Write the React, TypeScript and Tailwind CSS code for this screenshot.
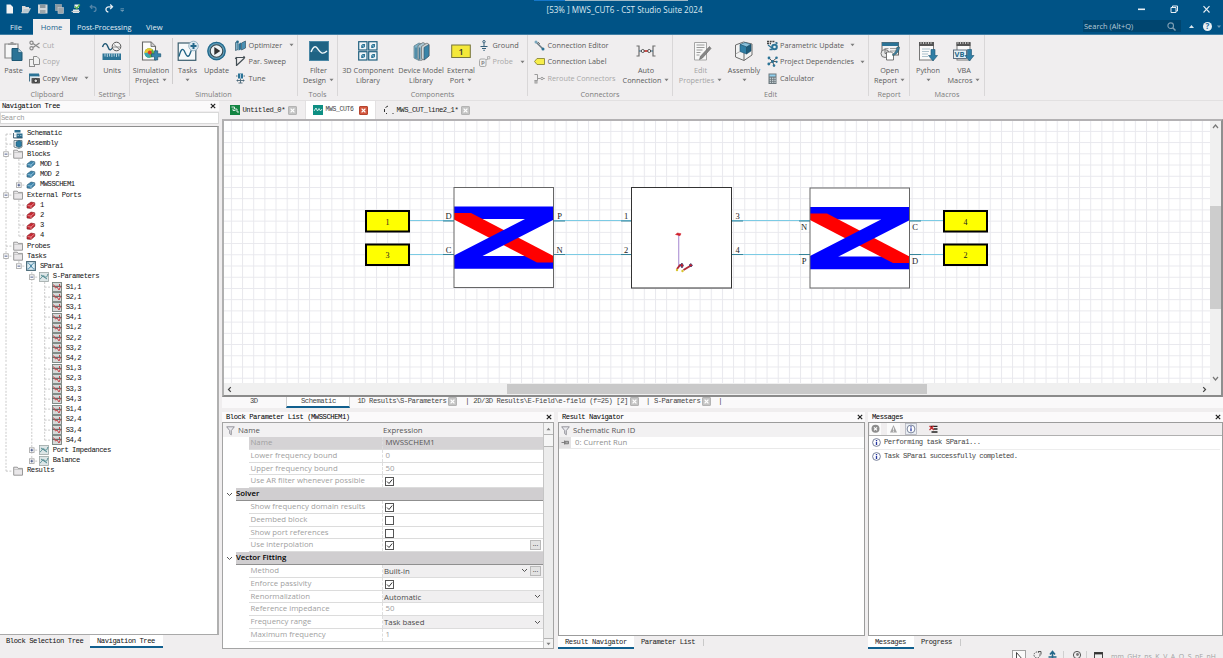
import React from "react";

type Kids = { children?: React.ReactNode };

const UI = "font-['Open_Sans','Noto_Sans',sans-serif]";
const MONO = "font-['Liberation_Mono',monospace] text-[7.2px] tracking-[-0.45px]";

/* ---------- small shared drawings ---------- */

function Caret({ className = "" }: { className?: string }) {
  return (
    <svg className={`h-[4px] w-[5px] shrink-0 ${className}`} viewBox="0 0 5 4">
      <path d="M0.5 0.8h4L2.5 3.2z" fill="#7d7d7d" />
    </svg>
  );
}

function CloseBox({ red = false }: { red?: boolean }) {
  return (
    <svg className="h-[9px] w-[9px] shrink-0" viewBox="0 0 9 9">
      <rect x="0.5" y="0.5" width="8" height="8" rx="0.5" fill={red ? "#d4583f" : "#c4c4c4"} stroke={red ? "#b5452f" : "#b4b4b4"} />
      <path d="M2.6 2.6l3.8 3.8M6.4 2.6L2.6 6.4" stroke="#fff" strokeWidth="1.3" />
    </svg>
  );
}

function PanelX() {
  return (
    <svg className="h-[6px] w-[6px] shrink-0" viewBox="0 0 6 6">
      <path d="M0.8 0.8l4.4 4.4M5.2 0.8L0.8 5.2" stroke="#222" strokeWidth="1.2" />
    </svg>
  );
}

function Funnel() {
  return (
    <svg className="h-[10px] w-[9px] shrink-0" viewBox="0 0 9 10">
      <path d="M0.7 0.8h7.6L5.3 4.6v4.2L3.7 7.6v-3z" fill="#e9e9ee" stroke="#8b8b93" strokeWidth="0.9" />
    </svg>
  );
}

/* ---------- ribbon drawings ---------- */

const big: Record<string, React.ReactNode> = {
  paste: (
    <>
      <path d="M1 3h13v6H9v8H1z" fill="#f7f7f7" stroke="#888" strokeWidth="1.2" />
      <path d="M4 4V2.500h2.500V1h3v1.500H12V4z" fill="#9a9a9a" />
      <path d="M8 7.500h6l4 4v8H8z" fill="#2b7396" stroke="#1d5673" />
      <path d="M14 7.500v4h4" fill="#bcd8e6" stroke="#1d5673" strokeWidth="0.700" />
    </>
  ),
  units: (
    <>
      <path d="M0.500 6c1.500-4.500 4-4.500 5.500 0s3.500 3 5 0" fill="none" stroke="#1d5673" strokeWidth="1.400" />
      <circle cx="14.500" cy="5.500" r="4.300" fill="#f4f4f4" stroke="#555" strokeWidth="1" />
      <path d="M12 3.500l5 4.500M11 6h7" stroke="#777" strokeWidth="0.800" />
      <rect x="0.500" y="12.500" width="18.500" height="6.500" fill="#2b7396" />
      <path d="M3 12.500v3M5.300 12.500v3.500M7.600 12.500v3M9.900 12.500v3.500M12.200 12.500v3M14.500 12.500v3.500M16.800 12.500v3" stroke="#dcebf2" strokeWidth="0.800" />
    </>
  ),
  simproj: (
    <>
      <path d="M1.500 1h8.500l4.500 4.500V19h-13z" fill="#fcfcfc" stroke="#666" strokeWidth="1.100" />
      <path d="M10 1v4.500h4.500" fill="#ccc" stroke="#666" strokeWidth="0.800" />
      <circle cx="8.300" cy="12" r="4.800" fill="#5db43c" />
      <path d="M3.500 12a4.800 4.800 0 0 1 5-4.800l3 1-3.200 4z" fill="#e9c62e" />
      <path d="M3.500 12l4.800-.5.8 5.200a4.800 4.800 0 0 1-5.600-4.700z" fill="#3aa6b0" />
      <circle cx="8.800" cy="11.500" r="2" fill="#dc3c2c" />
      <path d="M13.500 9.800h3.200v3h3v3h-3V19h-3.200v-3.200h-3v-3h3z" fill="#3585ad" stroke="#1d5673" strokeWidth="0.700" />
    </>
  ),
  tasks: (
    <>
      <rect x="0.200" y="2" width="17.600" height="17.300" fill="#f6f9fa" stroke="#3a5d6d" strokeWidth="1.200" />
      <path d="M1 15.500c2-8 4-9 6-4s4 5 5.500 0 3-4 5-4" fill="none" stroke="#1f6384" strokeWidth="1.300" />
      <circle cx="15.500" cy="5" r="4.800" fill="#dce9f0" stroke="#86a7b8" strokeWidth="0.800" />
      <path d="M15.500 2v6M12.500 5h6" stroke="#24688a" strokeWidth="2" />
    </>
  ),
  update: (
    <>
      <circle cx="9.500" cy="10" r="9.300" fill="#5f9dba" />
      <circle cx="9.500" cy="10" r="8.600" fill="none" stroke="#24688a" strokeWidth="1.200" />
      <circle cx="9.500" cy="10" r="6.300" fill="#eef2f4" stroke="#37484f" strokeWidth="1.100" />
      <path d="M7.300 6l6 4-6 4z" fill="#333" />
    </>
  ),
  filter: (
    <>
      <rect x="0" y="0" width="20" height="20" fill="#1f6384" />
      <rect x="0.500" y="0.500" width="19" height="19" fill="none" stroke="#4a87a5" />
      <path d="M0 10h20" stroke="#4a87a5" strokeWidth="0.500" />
      <path d="M2 11c2-5 4-7 6.500-3.500S13 14.500 18 10" fill="none" stroke="#f3f8fa" strokeWidth="1.400" />
    </>
  ),
  comp3d: (
    <>
      {[[0.7, 0.7], [10.7, 0.7], [0.7, 10.7], [10.7, 10.7]].map(([x, y]) => (
        <g key={`${x}-${y}`} transform={`translate(${x} ${y})`}>
          <rect width="8.300" height="8.300" fill="#f1f6f8" stroke="#215f7e" strokeWidth="1.200" />
          <path d="M2.500 3.500l1.500-1.200h2.300v2.500L5 6.300H2.500z" fill="#2b7396" />
          <path d="M3 4h2v2" fill="none" stroke="#9cc4d6" strokeWidth="0.700" />
        </g>
      ))}
    </>
  ),
  device: (
    <>
      <path d="M3 5l5-3 3 1.200v14L8 19.500 3 17z" fill="#7fb3ca" stroke="#557684" strokeWidth="0.700" />
      <path d="M7 4.500l5-3 2.500 1.300v14.500L10 19.500l-3-1.500z" fill="#a9c6d3" stroke="#666" strokeWidth="0.700" />
      <path d="M10.500 5.500L16 2l2 1.500V15l-5 4-2.500-1.300z" fill="#cdd5d8" stroke="#666" strokeWidth="0.700" />
      <path d="M13 6.500V19l5-4V3.500z" fill="#3a84a8" stroke="#35566a" strokeWidth="0.600" />
      <path d="M5 6.500v11M8.700 6.500V18" stroke="#30708f" strokeWidth="1.100" />
    </>
  ),
  extport: (
    <>
      <rect x="0.700" y="4" width="18.600" height="12.500" fill="#f4e83a" stroke="#77753e" strokeWidth="1" />
      <text x="10" y="13.700" textAnchor="middle" fontSize="9" fontWeight="600" fill="#333" fontFamily="Open Sans">1</text>
    </>
  ),
  auto: (
    <>
      <path d="M0.500 5H3v10H0.500M19.500 5H17v10h2.500" fill="none" stroke="#6c6c6c" strokeWidth="1.200" />
      <path d="M3 10h3M14 10h3" stroke="#356c88" strokeWidth="1.100" />
      <path d="M8 10h4" stroke="#c8322c" strokeWidth="1.700" />
      <circle cx="6.800" cy="10" r="1.500" fill="#fff" stroke="#444" strokeWidth="0.900" />
      <circle cx="13.200" cy="10" r="1.500" fill="#fff" stroke="#444" strokeWidth="0.900" />
    </>
  ),
  editprop: (
    <>
      <path d="M3.500 1.500h12V19h-12z" fill="#f7f7f7" stroke="#a5a5a5" />
      <path d="M5.500 4h8M5.500 6.500h8M5.500 9h6M5.500 11.500h4M5.500 14h3" stroke="#9a9a9a" strokeWidth="1" />
      <path d="M18.500 5.500l1.500 2-8.500 9.500-3 1.500 1-3.300z" fill="#858585" stroke="#666" strokeWidth="0.600" />
    </>
  ),
  assembly: (
    <>
      <path d="M1.500 4l8-3 8.500 2v11l-8 5.500L1.500 16z" fill="#f2f2f2" stroke="#6c6c6c" strokeWidth="1" />
      <path d="M10 19.500V11" stroke="#6c6c6c" />
      <path d="M6 3.500l5-2 6 2-4.500 2.500z" fill="#8ac0da" stroke="#1d5673" strokeWidth="0.600" />
      <path d="M6 3.500l6.500 2.500v7L6 10.500z" fill="#2f7ea5" stroke="#1d5673" strokeWidth="0.600" />
      <path d="M12.500 6L17 3.500v6.500l-4.500 3z" fill="#1d5c7c" stroke="#174a63" strokeWidth="0.600" />
      <path d="M1.500 13l4.500-2.500" fill="none" stroke="#999" strokeWidth="0.800" />
    </>
  ),
  report: (
    <>
      <rect x="2" y="1.500" width="16.500" height="12.500" fill="#f3f3f3" stroke="#666" />
      <rect x="2" y="1.500" width="16.500" height="3.500" fill="#2b7396" />
      <path d="M4.500 7.500h4M10 7.500h7M10 10h7" stroke="#888" strokeWidth="0.800" />
      <circle cx="5" cy="12.500" r="4" fill="#e7e7e7" stroke="#777" />
      <path d="M5 8.500v4h4" fill="none" stroke="#777" />
      <path d="M6.500 11h5l2 2v6h-7z" fill="#fff" stroke="#666" strokeWidth="0.900" />
      <path d="M19.500 6c0 4-2.500 7-6 8.500l-1.500-.5c3-2 4-4 5-8z" fill="#3f7e9f" stroke="#355" strokeWidth="0.500" />
    </>
  ),
  python: (
    <>
      <rect x="1.500" y="2" width="14" height="17" fill="#fafafa" stroke="#777" />
      <rect x="1" y="1" width="15" height="4" fill="#555" />
      <path d="M3 0v3M5.500 0v3M8 0v3M10.500 0v3M13 0v3" stroke="#ddd" strokeWidth="0.800" />
      <path d="M4 8h8M4 10.500h7M4 13h6M4 15.500h6" stroke="#a5bcc8" strokeWidth="0.900" />
      <path d="M13 8.500h4v6h2.500L15 20l-4.500-5.500H13z" fill="#2f7ea5" stroke="#1d5673" strokeWidth="0.600" />
    </>
  ),
  vba: (
    <>
      <rect x="3" y="2" width="13" height="17" fill="#fafafa" stroke="#777" />
      <rect x="2.500" y="1" width="14" height="4" fill="#555" />
      <path d="M4 0v3M6.500 0v3M9 0v3M11.500 0v3M14 0v3" stroke="#ddd" strokeWidth="0.800" />
      <rect x="-0.500" y="9" width="13" height="8.500" fill="#e4eff5" stroke="#567" strokeWidth="0.900" />
      <text x="5.500" y="16.200" textAnchor="middle" fontSize="7.500" fontWeight="700" fill="#24688a" fontFamily="Open Sans">VB</text>
      <path d="M13.500 8.500h4v6H20L15.500 20 11 14.500h2.500z" fill="#2f7ea5" stroke="#1d5673" strokeWidth="0.600" />
    </>
  ),
};

const small: Record<string, React.ReactNode> = {
  cut: (
    <g fill="none" stroke="#8a8a8a" strokeWidth="1.200">
      <circle cx="2.500" cy="2.800" r="1.600" />
      <circle cx="2.500" cy="8.200" r="1.600" />
      <path d="M4 3.500L10.500 8M4 7.500L10.500 3" />
    </g>
  ),
  copy: (
    <g fill="#f1f1f1" stroke="#8c8c8c" strokeWidth="1">
      <rect x="0.500" y="3.500" width="5" height="7" />
      <path d="M4.500 0.500h3.500l2.500 2.500v5.500h-6z" />
    </g>
  ),
  copyview: (
    <>
      <path d="M0.500 8.500v-7h9.500v2" fill="#dbe7ed" stroke="#46728a" />
      <rect x="0" y="0.500" width="10" height="2.800" fill="#2b7396" />
      <rect x="2.500" y="5" width="8.500" height="5.500" rx="0.800" fill="#555" />
      <circle cx="6.800" cy="7.800" r="1.800" fill="#ddd" stroke="#222" strokeWidth="0.800" />
    </>
  ),
  optimizer: (
    <>
      <path d="M0.500 2.500L3 1.500v8L.5 10.500z" fill="#7fb3ca" stroke="#35566a" strokeWidth="0.700" />
      <path d="M3.500 4L6 2.500v7L3.500 10.500z" fill="#2b7396" />
      <path d="M6.500 3L10.500 1v7L6.500 10z" fill="#4a90b3" stroke="#35566a" strokeWidth="0.700" />
      <circle cx="2.500" cy="1.800" r="1.300" fill="#24688a" />
    </>
  ),
  parsweep: <path d="M1.500 10V1.500H10M1.500 9.500L9.500 2M0.300 3l1.200-2M8.500 .300l1.500 1.300" fill="none" stroke="#454f55" strokeWidth="1.200" />,
  tune: (
    <>
      <rect x="3" y="0.500" width="5" height="5" fill="#2b7396" />
      <path d="M5.500 1v4" stroke="#cde" strokeWidth="0.800" />
      <path d="M1 3h1.500M8.500 3H10M1.500 7.500h8M2.500 6.500v2M5.500 6v4M8.500 6.500v2M3.500 10h4" stroke="#4c6878" strokeWidth="0.900" />
    </>
  ),
  ground: (
    <g fill="none" stroke="#37607a" strokeWidth="1">
      <circle cx="5" cy="1.700" r="1.200" />
      <path d="M5 3v4M1.500 6.500h7M3 8.500h4M4.300 10.300h1.500" />
    </g>
  ),
  probe: (
    <>
      <rect x="0.500" y="3" width="6.500" height="7.500" rx="1.500" fill="#f0f0f0" stroke="#a9a9a9" />
      <text x="3.800" y="9.300" textAnchor="middle" fontSize="6" fontWeight="700" fill="#8a8a8a" fontFamily="Open Sans">P</text>
      <path d="M7 3.500h1.500V0.600h2.300v2.300H8.500" fill="none" stroke="#a9a9a9" strokeWidth="0.900" />
    </>
  ),
  coneditor: (
    <>
      <path d="M2.500 2.500L9 9" stroke="#6a7a84" strokeWidth="1.500" />
      <circle cx="2" cy="2" r="1.500" fill="#7aa7bd" />
      <circle cx="9" cy="9" r="1.500" fill="#2b7396" />
      <path d="M4 2l2 2" stroke="#444" strokeWidth="0.700" />
    </>
  ),
  conlabel: <path d="M0.500 5.500L3 2.500h7.500v6H3z" fill="#f7ee4a" stroke="#8a873c" strokeWidth="0.900" />,
  reroute: (
    <g fill="none" stroke="#9b9b9b" strokeWidth="1">
      <path d="M0.500 1.500h3v6H0.500M3.500 5.500h3" />
      <rect x="1" y="8" width="2" height="2" />
      <circle cx="8" cy="5.500" r="1.200" />
      <path d="M9 5.500h1.800" />
    </g>
  ),
  parupdate: (
    <>
      <path d="M0 1.500h8M0 3.500h4" stroke="#444" strokeWidth="1.300" strokeDasharray="2 0.700" />
      <path d="M1 5l4 3M2.500 9.500h3" stroke="#2b7396" strokeWidth="1.300" />
      <circle cx="7.500" cy="7" r="3.300" fill="#2b7396" />
      <circle cx="7.500" cy="7" r="1.300" fill="#e7f1f5" />
      <path d="M8.500 2.500l2 1" stroke="#24688a" strokeWidth="1.400" />
    </>
  ),
  deps: (
    <>
      <path d="M5.500 5.500L2 2M5.500 5.500L9.500 2M5.500 5.500L1.500 8M5.500 5.500l1.500 4M5.500 5.500h4" stroke="#444" strokeWidth="0.900" />
      <g fill="#2b7396">
        <circle cx="2" cy="2" r="1.400" />
        <circle cx="9.500" cy="1.800" r="1.300" />
        <circle cx="1.800" cy="8" r="1.400" />
        <circle cx="7" cy="9.600" r="1.300" />
        <circle cx="9.600" cy="5.800" r="1.100" />
        <circle cx="5.500" cy="5.500" r="1.500" />
      </g>
    </>
  ),
  calc: (
    <>
      <rect x="1.500" y="0.500" width="8" height="10.500" fill="#6c787e" />
      <rect x="2.500" y="1.500" width="6" height="2" fill="#8fd0ee" />
      <path d="M2.700 5.300h6M2.700 7.300h6M2.700 9.300h6" stroke="#dfe8ec" strokeWidth="1.100" strokeDasharray="1.400 0.900" />
    </>
  ),
};

function BigButton({ icon, w, lines, caret, dim }: { icon: string; w: string; lines: string[]; caret?: boolean; dim?: boolean }) {
  const two = lines.length > 1;
  return (
    <div className={`flex ${w} shrink-0 flex-col items-center ${dim ? "text-[#a3a3a3]" : "text-[#5b5b5b]"}`}>
      <svg className="mt-[6px] h-[20px] w-[20px] overflow-visible" viewBox="0 0 20 20">{big[icon]}</svg>
      <div className="mt-[4px] h-[10px] whitespace-nowrap leading-[10px]">{lines[0]}</div>
      <div className="flex h-[10px] items-center gap-[3px] whitespace-nowrap leading-[10px]">
        {two && <span>{lines[1]}</span>}
        {caret && <Caret />}
      </div>
    </div>
  );
}

function SmallButton({ icon, label, caret, dim, gap = "ml-[7px]" }: { icon: string; label: string; caret?: boolean; dim?: boolean; gap?: string }) {
  return (
    <div className={`flex h-[16.600px] items-center whitespace-nowrap ${dim ? "text-[#a8a8a8]" : "text-[#5b5b5b]"}`}>
      <svg className="mr-[2.500px] h-[11px] w-[11px] shrink-0 overflow-visible" viewBox="0 0 11 11">{small[icon]}</svg>
      <span>{label}</span>
      {caret && <Caret className={gap} />}
    </div>
  );
}

function Group({ w, title, children }: { w: string; title: string } & Kids) {
  return (
    <div className={`flex ${w} shrink-0 flex-col`}>
      <div className="flex h-[61px] w-full border-r border-[#d9d7d8]">
        <div className="flex w-full flex-col">
          <div className="flex h-[53px]">{children}</div>
          <div className="-mb-[4px] h-[12px] text-center leading-[12px] text-[#7c7c7c]">{title}</div>
        </div>
      </div>
    </div>
  );
}

function Stack({ w = "", children }: { w?: string } & Kids) {
  return <div className={`flex ${w} flex-col pt-[2px]`}>{children}</div>;
}

function Ribbon() {
  return (
    <div className={`flex h-[66px] shrink-0 border-b border-[#e2e0e1] bg-[#f0eeef] text-[7.300px] ${UI}`}>
      <Group w="w-[95px]" title="Clipboard">
        <BigButton icon="paste" w="w-[27px]" lines={["Paste"]} />
        <Stack w="ml-[2px]">
          <SmallButton icon="cut" label="Cut" dim />
          <SmallButton icon="copy" label="Copy" dim />
          <SmallButton icon="copyview" label="Copy View" caret gap="ml-[7px]" />
        </Stack>
      </Group>
      <Group w="w-[35px]" title="Settings">
        <BigButton icon="units" w="w-[34px]" lines={["Units"]} />
      </Group>
      <Group w="w-[168px]" title="Simulation">
        <BigButton icon="simproj" w="w-[42px]" lines={["Simulation", "Project"]} caret />
        <div className="mt-[3px] h-[46px] w-px bg-[#cfcdce]" />
        <BigButton icon="tasks" w="w-[29px]" lines={["Tasks"]} caret />
        <BigButton icon="update" w="w-[29px]" lines={["Update"]} />
        <Stack w="ml-[4px]">
          <SmallButton icon="optimizer" label="Optimizer" caret />
          <SmallButton icon="parsweep" label="Par. Sweep" />
          <SmallButton icon="tune" label="Tune" />
        </Stack>
      </Group>
      <Group w="w-[40px]" title="Tools">
        <BigButton icon="filter" w="w-[41px]" lines={["Filter", "Design"]} caret />
      </Group>
      <Group w="w-[190px]" title="Components">
        <div className="-mr-px ml-px flex">
          <BigButton icon="comp3d" w="w-[58px]" lines={["3D Component", "Library"]} />
          <BigButton icon="device" w="w-[48px]" lines={["Device Model", "Library"]} />
          <BigButton icon="extport" w="w-[32px]" lines={["External", "Port"]} caret />
        </div>
        <Stack w="ml-[3px]">
          <SmallButton icon="ground" label="Ground" />
          <SmallButton icon="probe" label="Probe" caret dim />
        </Stack>
      </Group>
      <Group w="w-[145px]" title="Connectors">
        <Stack w="ml-[6px] w-[86px]">
          <SmallButton icon="coneditor" label="Connection Editor" />
          <SmallButton icon="conlabel" label="Connection Label" />
          <SmallButton icon="reroute" label="Reroute Connectors" dim />
        </Stack>
        <BigButton icon="auto" w="w-[52px]" lines={["Auto", "Connection"]} caret />
      </Group>
      <Group w="w-[196px]" title="Edit">
        <BigButton icon="editprop" w="w-[55px]" lines={["Edit", "Properties"]} caret dim />
        <BigButton icon="assembly" w="w-[32px]" lines={["Assembly"]} caret />
        <Stack w="ml-[6.500px]">
          <SmallButton icon="parupdate" label="Parametric Update" caret gap="ml-[6px]" />
          <SmallButton icon="deps" label="Project Dependencies" caret gap="ml-[6px]" />
          <SmallButton icon="calc" label="Calculator" />
        </Stack>
      </Group>
      <Group w="w-[41px]" title="Report">
        <BigButton icon="report" w="w-[41px]" lines={["Open", "Report"]} caret />
      </Group>
      <Group w="w-[75px]" title="Macros">
        <BigButton icon="python" w="w-[36px]" lines={["Python"]} caret />
        <BigButton icon="vba" w="w-[36px]" lines={["VBA", "Macros"]} caret />
      </Group>
    </div>
  );
}

/* ---------- title and menu ---------- */

function TitleBar() {
  return (
    <div className={`flex h-[19px] shrink-0 items-center bg-[#005386] text-[#dbe8f0] ${UI}`}>
      <svg className="h-[19px] w-[130px] shrink-0" viewBox="0 0 130 19">
        <path d="M6.500 4.500h4l2.500 2.500v6.500H6.500z" fill="#f3f3f3" />
        <path d="M22 6h3l1 1h3v2h-5l-2 4z" fill="#d9d9d9" />
        <path d="M21.500 13l2.500-4.500h6.500L28 13z" fill="#b9c8cf" stroke="#e8e8e8" strokeWidth="0.500" />
        <rect x="38" y="4.500" width="9.500" height="9" fill="#cfd5d8" />
        <rect x="40" y="4.500" width="5.500" height="3.500" fill="#8b979e" />
        <rect x="40" y="10" width="5.500" height="3.500" fill="#9ba6ab" />
        <rect x="55.500" y="4.500" width="6" height="6" fill="#8b979e" stroke="#a5b1b8" strokeWidth="0.600" />
        <rect x="58" y="7.500" width="5.500" height="6" fill="#9aa5ab" stroke="#c5ccd0" strokeWidth="0.600" />
        <path d="M73 9.500h6V13h-6zM74.500 4.500h4.500v3.500h-4.500z" fill="#ecedee" />
        <path d="M71.500 11.500h8.500" stroke="#bfc7cb" strokeWidth="1.300" />
        <path d="M75 6.500l1.800 2 3-4" fill="none" stroke="#5db947" strokeWidth="1.300" />
        <path d="M90.500 6.800h3.200a2.300 2.300 0 0 1 0 4.700M92.200 4.800l-2 2 2 2" fill="none" stroke="#5586a8" strokeWidth="1.200" />
        <path d="M112 6.800h-3.200a2.600 2.600 0 0 0-.500 5.200M110.200 4.500l2.300 2.300-2.300 2.300" fill="none" stroke="#e6eef3" strokeWidth="1.300" />
        <path d="M120.500 8.500h3.500M120.500 10h3.500l-1.700 1.500z" fill="#6f9ab6" stroke="#6f9ab6" strokeWidth="0.600" />
      </svg>
      <div className="flex h-[19px] flex-1 flex-col">
        <div className="ml-[404px] flex h-px shrink-0">
          <div className="w-[31px] bg-[#1577c9]" />
          <div className="w-[123px] bg-[#9fb9c6]" />
        </div>
        <div className="ml-[416.500px] whitespace-nowrap text-[8.050px] leading-[18px]">[53% ] MWS_CUT6 - CST Studio Suite 2024</div>
      </div>
      <svg className="h-[19px] w-[93px] shrink-0" viewBox="0 0 93 19">
        <path d="M8 9.300h7" stroke="#e8eff4" strokeWidth="1.600" />
        <path d="M41 7.500h5v5h-5zM42.500 7.500V6h5v5H46" fill="none" stroke="#e8eff4" strokeWidth="1" />
        <path d="M73.500 6.200l6 6.300M79.500 6.200l-6 6.300" stroke="#e8eff4" strokeWidth="1.100" />
      </svg>
    </div>
  );
}

function MenuBar() {
  return (
    <div className={`flex h-[16px] shrink-0 items-stretch border-b border-[#3f7ea4] bg-[#005386] text-[7.600px] leading-[16px] text-[#e3edf3] ${UI}`}>
      <div className="w-[33px] pl-[10px]">File</div>
      <div className="-mb-px w-[37px] bg-[#f0eeef] text-center text-[#1a5f8c]">Home</div>
      <div className="w-[69px] pl-[7px] text-[7.400px]">Post-Processing</div>
      <div className="flex-1 pl-[7px]">View</div>
      <div className="mt-px flex h-[12px] w-[98px] items-center justify-between bg-[#00456f] pl-[1px] pr-[5px] text-[7.450px] leading-[11px] text-[#b7cbd8]">
        <span>Search (Alt+Q)</span>
        <svg className="h-[9px] w-[9px]" viewBox="0 0 9 9">
          <circle cx="3.700" cy="3.700" r="2.800" fill="none" stroke="#7f9fb4" strokeWidth="1.100" />
          <path d="M5.800 5.800L8.500 8.500" stroke="#7f9fb4" strokeWidth="1.500" />
        </svg>
      </div>
      <svg className="h-[15px] w-[42px]" viewBox="0 0 42 15">
        <path d="M8 9l2.500-3L13 9z" fill="#dce8ef" />
        <circle cx="26.500" cy="7.500" r="4.500" fill="#e9f1f5" />
        <text x="26.500" y="10.300" textAnchor="middle" fontSize="8" fontWeight="700" fill="#1c6a9a" fontFamily="Open Sans">?</text>
        <path d="M36 6.500h4L38 9z" fill="#6f9ab6" />
      </svg>
    </div>
  );
}

/* ---------- navigation tree ---------- */

type Node = { l: number; t: string; i: string; x?: "-" | "+"; g: number[]; end?: boolean };

const sNames = [1, 2, 3, 4].flatMap((b) => [1, 2, 3, 4].map((a) => `S${a},${b}`));

const tree: Node[] = [
  { l: 0, t: "Schematic", i: "schem", g: [] },
  { l: 0, t: "Assembly", i: "asm", g: [] },
  { l: 0, t: "Blocks", i: "folder", x: "-", g: [] },
  { l: 1, t: "MOD 1", i: "blue", g: [0] },
  { l: 1, t: "MOD 2", i: "blue", g: [0] },
  { l: 1, t: "MWSSCHEM1", i: "blue", x: "+", g: [0], end: true },
  { l: 0, t: "External Ports", i: "folder", x: "-", g: [] },
  { l: 1, t: "1", i: "red", g: [0] },
  { l: 1, t: "2", i: "red", g: [0] },
  { l: 1, t: "3", i: "red", g: [0] },
  { l: 1, t: "4", i: "red", g: [0], end: true },
  { l: 0, t: "Probes", i: "folder", g: [] },
  { l: 0, t: "Tasks", i: "folder", x: "-", g: [] },
  { l: 1, t: "SPara1", i: "task", x: "-", g: [0], end: true },
  { l: 2, t: "S-Parameters", i: "plot", x: "-", g: [0] },
  ...sNames.map((t, k): Node => ({ l: 3, t, i: "sp", g: [0, 2], end: k === 15 })),
  { l: 2, t: "Port Impedances", i: "plot", x: "+", g: [0] },
  { l: 2, t: "Balance", i: "plot", x: "+", g: [0], end: true },
  { l: 0, t: "Results", i: "folder", g: [], end: true },
];

const treeIcons: Record<string, React.ReactNode> = {
  schem: (
    <>
      <path d="M0.500 2.500h3M1.500 1h6v2.500h-6zM3.500 4.500h6V9h-6z" fill="#2d6f90" />
      <path d="M1 6h2M1 8.500h2M4.500 6.500H6M7 6.500h1.500" stroke="#a8c4d2" strokeWidth="0.800" />
      <path d="M0.500 4v5h9" fill="none" stroke="#29465a" strokeWidth="0.800" />
    </>
  ),
  asm: (
    <>
      <path d="M1 1.500h8v6.500L6 9.500 1 8z" fill="#e6ecef" stroke="#6d7d85" strokeWidth="0.900" />
      <path d="M3 3l3-1.500 2.500 1.200V7L6 8.500 3 7z" fill="#2b7ba1" stroke="#174a63" strokeWidth="0.500" />
    </>
  ),
  folder: (
    <>
      <path d="M0.700 1.200h3.600l.8 1.200h4.400v6.800H.7z" fill="#e9e7e9" stroke="#8e8e8e" strokeWidth="0.900" />
      <path d="M1 3.500h8.300" stroke="#bdbdbd" strokeWidth="0.700" />
    </>
  ),
  blue: (
    <>
      <path d="M1 5l4-3 3.800.8v2.400L5 8.500 1 8z" fill="#3f86ad" stroke="#2a566f" strokeWidth="0.600" />
      <path d="M1.500 5.500l3.500.5v2.500M5 6l3.500-3" fill="none" stroke="#aad0e2" strokeWidth="0.700" />
    </>
  ),
  red: (
    <>
      <path d="M1 5l4-3 3.800.8v2.400L5 8.500 1 8z" fill="#c72a34" stroke="#7c1c22" strokeWidth="0.600" />
      <path d="M1.500 5.500l3.500.5v2.500M5 6l3.500-3" fill="none" stroke="#eda7aa" strokeWidth="0.700" />
    </>
  ),
  task: (
    <>
      <rect x="0.600" y="0.600" width="8.800" height="8.800" fill="#d9eaf1" stroke="#4a6a79" strokeWidth="1.100" />
      <path d="M1.500 2c3 0 4 6 7 6M1.500 8c3 0 4-6 7-6" fill="none" stroke="#2b7396" strokeWidth="0.900" />
    </>
  ),
  plot: (
    <>
      <rect x="0.500" y="0.500" width="9" height="9" fill="#dce5e6" stroke="#9ca6a5" strokeWidth="0.800" />
      <path d="M1 7c2-1 2-4 4-3s2 3 4-2M2 3l6 4" fill="none" stroke="#3f7f86" strokeWidth="0.900" />
    </>
  ),
  sp: (
    <>
      <rect x="0.500" y="0.500" width="9" height="9" fill="#d6d9d8" stroke="#77807d" strokeWidth="0.900" />
      <path d="M0.500 4.300h9" stroke="#444" strokeWidth="0.900" />
      <path d="M1.500 2.500l2 3.500L5 5l2 3 1.500-3.500M7.500 2v2" fill="none" stroke="#c4454a" strokeWidth="1" />
    </>
  ),
};

const STEP = 12.9;
const ROW = 10.23;

function TreeRow({ n, first }: { n: Node; first: boolean }) {
  const w = 13 + STEP * n.l;
  const x = 6 + STEP * n.l;
  const mid = ROW / 2;
  return (
    <div className="flex h-[10.230px] items-center">
      <svg className="h-[10.230px] shrink-0" style={{ width: w }} viewBox={`0 0 ${w} ${ROW}`}>
        <g stroke="#bdbdbd" strokeWidth="0.800" strokeDasharray="2 1.400">
          {n.g.map((k) => (
            <path key={k} d={`M${6 + STEP * k} 0V${ROW}`} />
          ))}
          <path d={`M${x} ${first ? mid : 0}V${n.end ? mid : ROW}`} />
          <path d={`M${x} ${mid}H${w - 0.5}`} />
        </g>
        {n.x && (
          <>
            <rect x={x - 2.3} y={mid - 2.3} width="4.600" height="4.600" fill="#fff" stroke="#a2a2a2" strokeWidth="0.800" />
            <path d={`M${x - 1.4} ${mid}h2.800`} stroke="#3a4c80" strokeWidth="0.900" />
            {n.x === "+" && <path d={`M${x} ${mid - 1.4}v2.800`} stroke="#3a4c80" strokeWidth="0.900" />}
          </>
        )}
      </svg>
      <svg className="mr-[4px] h-[10px] w-[10px] shrink-0" viewBox="0 0 10 10">{treeIcons[n.i]}</svg>
      <span className="whitespace-pre text-[#111]">{n.t}</span>
    </div>
  );
}

function NavTree() {
  return (
    <div className="flex w-[219px] shrink-0 flex-col">
      <div className={`flex h-[10px] items-center justify-between bg-[#fbfafb] pl-[2px] pr-[3px] text-black ${MONO}`}>
        <span>Navigation Tree</span>
        <PanelX />
      </div>
      <div className={`mt-px flex h-[12px] items-center border border-[#d9d9d9] bg-white text-[#9b9b9b] ${MONO}`}>Search</div>
      <div className={`mt-[2px] h-[509px] overflow-hidden border-b border-r-2 border-t border-b-[#a9a9a9] border-r-[#b0b0b0] border-t-[#8d8d8d] bg-white pt-[1.500px] ${MONO}`}>
        {tree.map((n, k) => (
          <TreeRow key={k} n={n} first={k === 0} />
        ))}
      </div>
      <div className={`flex h-[13px] items-stretch leading-[13px] text-[#111] ${MONO}`}>
        <div className="w-[90px] pl-[6px]">Block Selection Tree</div>
        <div className="w-[73px] border-b-2 border-[#11608f] bg-white pl-[7px]">Navigation Tree</div>
      </div>
    </div>
  );
}

/* ---------- document area ---------- */

function DocTabs() {
  return (
    <div className={`flex h-[18px] shrink-0 items-stretch text-[#222] ${MONO}`}>
      <div className="flex w-[83px] items-center gap-[2.500px] pl-[8px]">
        <svg className="h-[10px] w-[10px]" viewBox="0 0 10 10">
          <rect width="10" height="10" fill="#138442" />
          <path d="M1.500 2h3v2h2.500v3h2M3 3.500v2h2.500" fill="none" stroke="#e9f5ee" strokeWidth="0.900" />
        </svg>
        <span>Untitled_0*</span>
        <CloseBox />
      </div>
      <div className="flex w-[71px] items-center gap-[2.500px] border-x border-[#e3e1e2] bg-white pl-[7px] text-[6.400px] tracking-[-0.350px]">
        <svg className="h-[10px] w-[10px]" viewBox="0 0 10 10">
          <rect width="10" height="10" fill="#0e8f83" />
          <path d="M1 6l2-3 1.500 3L6 3.500 7.500 6 9 4" fill="none" stroke="#dff3f0" strokeWidth="0.900" />
        </svg>
        <span className="w-[31px] whitespace-nowrap text-[#444]">MWS_CUT6</span>
        <CloseBox red />
      </div>
      <div className="flex items-center gap-[2.500px] pl-[8px]">
        <svg className="h-[10px] w-[10px]" viewBox="0 0 10 10">
          <path d="M4 1L1.500 2.500M0.500 4v3M2 8l1 1M8.500 8.500h1" stroke="#333" strokeWidth="1" />
        </svg>
        <span>MWS_CUT_line2_1*</span>
        <CloseBox />
      </div>
    </div>
  );
}

function PortBox({ x, y, n }: { x: number; y: number; n: string }) {
  return (
    <g>
      <rect x={x} y={y} width="43" height="20.500" fill="#ffff00" stroke="#000" strokeWidth="2" />
      <text x={x + 21.500} y={y + 13.500} textAnchor="middle" fontSize="8" fill="#222">{n}</text>
    </g>
  );
}

function Crossover({ x, y }: { x: number; y: number }) {
  return (
    <g transform={`translate(${x} ${y})`}>
      <rect x="0" y="0" width="99.500" height="100" fill="#fff" />
      <path d="M0 19h99.500v12.500H0z" fill="#0000ff" />
      <path d="M0 68.500h99.500v12.700H0z" fill="#0000ff" />
      <path d="M0 25.500h17L99.500 68.500V75H83L0 32z" fill="#ff0000" />
      <path d="M71 31.500V30h28.500v2.200L28.500 68.500V70H0v-2z" fill="#0000ff" />
      <rect x="0" y="0" width="99.500" height="100" fill="none" stroke="#666" strokeWidth="1" />
    </g>
  );
}

function Schematic() {
  return (
    <svg className="h-[262px] w-[986px] shrink-0 bg-white" viewBox="224 121 986 262" fontFamily="Liberation Serif">
      <defs>
        <pattern id="grid" x="230.900" y="130.900" width="11.160" height="11.220" patternUnits="userSpaceOnUse">
          <path d="M0.500 0V11.220M0 0.500H11.160" stroke="#e8e8ed" strokeWidth="1" fill="none" />
        </pattern>
      </defs>
      <rect x="224" y="121" width="986" height="262" fill="url(#grid)" />
      <path d="M409 220.500h45M409 254.500h45M553.500 220.500h78M553.500 254.500h78M731.500 220.500h79M731.500 254.500h79M909.500 220.500h34M909.500 254.500h34" stroke="#7ccbe4" strokeWidth="1" />
      <path d="M443 221h11M443 254.500h11M554 221h11M554 254.500h11M621 221h11M621 254.500h11M732 221h11M732 254.500h11M799 221h11M799 254.500h11M910 221h11M910 254.500h11" stroke="#35859b" strokeWidth="1.200" />
      <PortBox x={366} y={211} n="1" />
      <PortBox x={366} y={244.500} n="3" />
      <PortBox x={944} y={211} n="4" />
      <PortBox x={944} y={244.500} n="2" />
      <Crossover x={454} y={187.500} />
      <rect x="631.500" y="187.500" width="100" height="100.500" fill="#fff" stroke="#333" strokeWidth="1" />
      <Crossover x={810} y={188} />
      <path d="M678.700 235v31" stroke="#b39ad8" strokeWidth="1.200" />
      <path d="M675.500 234.500l2-1.500 3.500.700-1 2z" fill="#d01f2a" stroke="#d01f2a" strokeWidth="0.500" />
      <path d="M677 269l3.500-4.500M683.500 270l7.500-4.500" stroke="#b02a38" strokeWidth="2" />
      <path d="M680 265l2-2 1.500 2.500-1.500 2.500zM689 265l2-1.500 1.500 2-1.500 1.500z" fill="#c41f2c" stroke="#32407a" strokeWidth="0.700" />
      <circle cx="677" cy="270" r="1.200" fill="#d8c42e" />
      <circle cx="682.500" cy="271" r="1.200" fill="#d8c42e" />
      <g fontSize="8.500" fill="#222" textAnchor="middle">
        <text x="448.500" y="219">D</text>
        <text x="448.500" y="252.500">C</text>
        <text x="559.500" y="219">P</text>
        <text x="559.500" y="252.500">N</text>
        <text x="626" y="219">1</text>
        <text x="626" y="252.500">2</text>
        <text x="737.500" y="219">3</text>
        <text x="737.500" y="252.500">4</text>
        <text x="804" y="230">N</text>
        <text x="804" y="263.500">P</text>
        <text x="915" y="230">C</text>
        <text x="915" y="263.500">D</text>
      </g>
    </svg>
  );
}

function Canvas() {
  return (
    <div className="flex h-[278px] w-full shrink-0 flex-col border-2 border-b-2 border-b-[#8b8b8b] border-l-[#b0b0b0] border-r-[#8f8f8f] border-t-[#b3b1b3] bg-[#f0f0f0]">
      <div className="flex h-[262px]">
        <Schematic />
        <div className="flex flex-1 flex-col items-center bg-[#f0f0f0]">
          <svg className="mt-[3px] h-[5px] w-[7px]" viewBox="0 0 7 5"><path d="M1 4l2.500-3L6 4" fill="none" stroke="#777" strokeWidth="1.200" /></svg>
          <div className="mt-[77px] h-[103px] w-full bg-[#cdcdcd]" />
          <svg className="mt-[67px] h-[5px] w-[7px]" viewBox="0 0 7 5"><path d="M1 1l2.500 3L6 1" fill="none" stroke="#777" strokeWidth="1.200" /></svg>
        </div>
      </div>
      <div className="flex flex-1 items-center">
        <svg className="ml-[3px] h-[7px] w-[5px]" viewBox="0 0 5 7"><path d="M3.800 1.200L1.500 3.500l2.300 2.300" fill="none" stroke="#444" strokeWidth="1.200" /></svg>
        <div className="ml-[275px] h-[10px] w-[420px] bg-[#c9c9c9]" />
        <svg className="ml-[275px] h-[7px] w-[5px]" viewBox="0 0 5 7"><path d="M1.200 1.200l2.300 2.300-2.300 2.300" fill="none" stroke="#444" strokeWidth="1.200" /></svg>
      </div>
    </div>
  );
}

function ViewTabs() {
  return (
    <div className={`flex h-[11px] w-full shrink-0 items-stretch whitespace-pre bg-[#faf9fa] leading-[9px] text-[#444] ${MONO}`}>
      <div className="w-[64px] pl-[28px]">3D</div>
      <div className="w-[64px] border-x border-b-2 border-x-[#cfcfcf] border-b-[#11608f] bg-white pl-[14px]">Schematic</div>
      <div className="ml-[7.500px] flex h-[9px] items-center gap-[2px]"><span>1D Results\S-Parameters</span><CloseBox /></div>
      <div className="ml-[8px] w-[8px]">|</div>
      <div className="flex h-[9px] items-center gap-[2px]"><span>2D/3D Results\E-Field\e-field (f=25) [2]</span><CloseBox /></div>
      <div className="ml-[7px] w-[8px]">|</div>
      <div className="flex h-[9px] items-center gap-[2px]"><span>S-Parameters</span><CloseBox /></div>
      <div className="ml-[7px]">|</div>
    </div>
  );
}

/* ---------- lower panels ---------- */

function PanelTitle({ children }: Kids) {
  return (
    <div className={`flex h-[10px] shrink-0 items-center justify-between bg-[#fbfafb] pl-[4px] pr-[2px] text-black ${MONO}`}>
      <span className="whitespace-nowrap">{children}</span>
      <PanelX />
    </div>
  );
}

function Check({ on }: { on: boolean }) {
  return (
    <svg className="ml-[2px] mt-[2px] h-[9px] w-[9px]" viewBox="0 0 9 9">
      <rect x="0.500" y="0.500" width="8" height="8" fill="#fff" stroke="#555" />
      {on && <path d="M2 4.500l2 2 3.200-4" fill="none" stroke="#333" strokeWidth="1" />}
    </svg>
  );
}

type Param = { k: string; v?: string; c?: boolean; sel?: boolean; dots?: boolean; head?: boolean; hi?: boolean };

const params: Param[] = [
  { k: "Name", v: "MWSSCHEM1", hi: true },
  { k: "Lower frequency bound", v: "0" },
  { k: "Upper frequency bound", v: "50" },
  { k: "Use AR filter whenever possible", c: true },
  { k: "Solver", head: true },
  { k: "Show frequency domain results", c: true },
  { k: "Deembed block", c: false },
  { k: "Show port references", c: false },
  { k: "Use interpolation", c: true, dots: true },
  { k: "Vector Fitting", head: true },
  { k: "Method", v: "Built-in", sel: true, dots: true },
  { k: "Enforce passivity", c: true },
  { k: "Renormalization", v: "Automatic", sel: true },
  { k: "Reference impedance", v: "50" },
  { k: "Frequency range", v: "Task based", sel: true },
  { k: "Maximum frequency", v: "1" },
];

function Chevron() {
  return (
    <svg className="h-[5px] w-[7px] shrink-0" viewBox="0 0 7 5">
      <path d="M1 1l2.500 2.500L6 1" fill="none" stroke="#555" strokeWidth="1" />
    </svg>
  );
}

function ParamRow({ p }: { p: Param }) {
  if (p.head) {
    return (
      <div className="flex h-[12.800px] items-stretch leading-[11px]">
        <div className="flex w-[13px] items-center pl-[3px]"><Chevron /></div>
        <div className="flex-1 border-b border-[#8f8f8f] bg-[#d0ced0] font-semibold text-black">{p.k}</div>
      </div>
    );
  }
  return (
    <div className="flex h-[12.800px] items-stretch pl-[26px] leading-[11px]">
      <div className={`flex flex-1 border-b border-[#dcdcdc] ${p.hi ? "bg-[#d5d3d5]" : ""}`}>
        <div className="w-[134px] border-r border-dashed border-[#dedede] pl-[1.500px] text-[#a0a0a0]">{p.k}</div>
        <div className={`flex flex-1 items-start ${p.sel ? "bg-[#f0eff0]" : ""}`}>
          {p.c !== undefined && <Check on={p.c} />}
          {p.v !== undefined && <span className={p.sel ? "pl-[1px] pt-[1px] text-[#4a4a4a]" : p.hi ? "pl-[2.500px] text-[#555]" : "pl-[2.500px] text-[#a0a0a0]"}>{p.v}</span>}
          <div className="ml-auto flex h-full items-center gap-[2px] pr-[2px]">
            {p.sel && <Chevron />}
            {p.dots && (
              <div className="flex h-[10px] w-[11px] items-center justify-center border border-[#b9b9b9] bg-[#e2e2e2] pb-[3px] text-[7px] text-[#333]">...</div>
            )}
          </div>
        </div>
      </div>
    </div>
  );
}

function ParamPanel() {
  return (
    <div className="flex w-[332px] shrink-0 flex-col">
      <PanelTitle>Block Parameter List (MWSSCHEM1)</PanelTitle>
      <div className={`flex h-[227px] border border-[#a4a4a4] bg-white text-[7.800px] ${UI}`}>
        <div className="flex flex-1 flex-col">
          <div className="flex h-[14px] items-center bg-[#f2f1f2] pt-px text-[#555]">
            <div className="flex w-[160px] items-center gap-[3px] pl-[3px]"><Funnel /><span>Name</span></div>
            <span>Expression</span>
          </div>
          {params.map((p) => (
            <ParamRow key={p.k} p={p} />
          ))}
        </div>
        <div className="flex w-[10px] flex-col justify-between border-l border-[#c5c5c5] bg-[#ececec]">
          <div>
            <div className="flex h-[12px] items-center justify-center border-b border-[#b5b5b5] bg-[#f3f3f3]"><Caret className="rotate-180" /></div>
            <div className="h-[12px] border-b border-[#b5b5b5] bg-[#f6f6f6]" />
          </div>
          <div className="flex h-[10px] items-center justify-center border-t border-[#b5b5b5] bg-[#f3f3f3]"><Caret /></div>
        </div>
      </div>
    </div>
  );
}

function BottomTabs({ a, b, w }: { a: string; b: string; w: string }) {
  return (
    <div className={`flex h-[13px] items-stretch leading-[13px] text-[#222] ${MONO}`}>
      <div className={`${w} border-b-2 border-[#11608f] bg-white pl-[7px]`}>{a}</div>
      <div className="my-[3px] border-r border-[#c9c9c9] pl-[7px] pr-[8px] leading-[7px]">{b}</div>
    </div>
  );
}

function ResultPanel() {
  return (
    <div className="ml-[4px] flex w-[307px] shrink-0 flex-col">
      <PanelTitle>Result Navigator</PanelTitle>
      <div className={`h-[214px] border border-[#9c9c9c] bg-white text-[7.650px] ${UI}`}>
        <div className="flex h-[14px] items-center gap-[3px] bg-[#f2f1f2] pl-[2px] pt-px text-[#555]"><Funnel /><span>Schematic Run ID</span></div>
        <div className="flex h-[12px] items-center border-b border-[#e9e9e9] text-[7.700px] text-[#8f8f8f]">
          <svg className="mr-[4px] h-[11px] w-[12px] bg-[#e4e3e4]" viewBox="0 0 12 11">
            <path d="M2.500 5.500h3M5.500 3.500v4M6 4.300h3.500v2.500H6z" stroke="#777" strokeWidth="0.900" fill="#aaa" />
          </svg>
          <span>0: Current Run</span>
        </div>
      </div>
      <BottomTabs a="Result Navigator" b="Parameter List" w="w-[76px]" />
    </div>
  );
}

function Info() {
  return (
    <svg className="h-[9px] w-[9px] shrink-0" viewBox="0 0 9 9">
      <circle cx="4.500" cy="4.500" r="3.900" fill="#fdfdff" stroke="#6b7590" strokeWidth="0.900" />
      <path d="M4.500 4v3M4.500 2v1.200" stroke="#2436a0" strokeWidth="1.300" />
    </svg>
  );
}

function MessagesPanel() {
  return (
    <div className="ml-[3px] flex flex-1 flex-col">
      <PanelTitle>Messages</PanelTitle>
      <div className="flex h-[214px] flex-col border border-[#9c9c9c] bg-white">
        <div className="flex h-[13px] shrink-0 items-center border-b border-[#b0b0b0] bg-[#f0eeef] pl-[1px]">
          <svg className="h-[12px] w-[70px]" viewBox="0 0 70 12">
            <rect x="0" y="0" width="11" height="12" fill="#fbfbfb" />
            <circle cx="5.500" cy="5.800" r="4" fill="#8d8d8d" />
            <path d="M4 4.300l3 3M7 4.300l-3 3" stroke="#fff" strokeWidth="1.200" />
            <rect x="17" y="0" width="13" height="12" fill="#fbfbfb" />
            <path d="M23.500 2l3.500 7.500h-7z" fill="#a5a5a5" />
            <path d="M23.500 4.500v3M23.500 8v.8" stroke="#fff" strokeWidth="0.800" />
            <rect x="35.500" y="0.500" width="11" height="11" fill="#e8edf2" stroke="#a9a9b4" strokeWidth="0.700" />
            <circle cx="41" cy="6" r="3.900" fill="#fff" stroke="#6b7590" strokeWidth="0.900" />
            <path d="M41 5.300v3M41 3.300v1.200" stroke="#2436a0" strokeWidth="1.300" />
            <path d="M60.500 3.300h7M63.500 6h4M61.500 9h6" stroke="#222" strokeWidth="1.300" />
            <path d="M59.500 3l4.500 4M63.500 3l-4 4" stroke="#c5282c" strokeWidth="1.200" />
          </svg>
        </div>
        <div className={`flex flex-col pl-[3px] pr-[2px] text-[#444] ${MONO}`}>
          <div className="flex h-[14px] items-center gap-[3px] border-b border-[#ededed]"><Info /><span>Performing task SPara1...</span></div>
          <div className="flex h-[13px] items-center gap-[3px] tracking-[-0.500px]"><Info /><span>Task SPara1 successfully completed.</span></div>
        </div>
      </div>
      <BottomTabs a="Messages" b="Progress" w="w-[46px]" />
    </div>
  );
}

function StatusBar() {
  return (
    <div className={`flex h-[9px] shrink-0 items-start overflow-hidden pl-[1012px] ${UI}`}>
      <svg className="h-[10px] w-[99px] shrink-0" viewBox="0 0 99 10">
        <rect x="0.500" y="1.500" width="13" height="12" fill="#fafafa" stroke="#9a9a9a" strokeWidth="0.900" />
        <path d="M4.500 3.500v8l2-2 4 1z" fill="#fff" stroke="#333" strokeWidth="0.900" />
        <circle cx="25" cy="6" r="3" fill="none" stroke="#555" strokeDasharray="1.500 1" />
        <path d="M26 2.500h3v3" stroke="#555" fill="none" />
        <path d="M40.500 2.500v8M36.500 8h8M38 5.500l2.500-3 2.500 3" stroke="#24688a" strokeWidth="1.600" fill="none" />
        <path d="M51.500 2v8M74.500 2v8" stroke="#d0d0d0" />
        <circle cx="65" cy="6" r="3.600" fill="none" stroke="#555" strokeWidth="1" />
        <circle cx="65.500" cy="5.500" r="1.400" fill="#777" />
        <rect x="87" y="3.500" width="8" height="8" fill="#eee" stroke="#444" transform="translate(-4.500 0)" />
        <path d="M82.500 4.500h8" stroke="#333" strokeWidth="1.800" />
      </svg>
      <span className="mt-[2px] whitespace-pre text-[6.900px] leading-[11px] text-[#a3a3a3]">mm  GHz  ns  K  V  A  Ω  S  pF  nH</span>
    </div>
  );
}

export default function App() {
  return (
    <div className="flex h-[658px] w-[1223px] flex-col overflow-hidden bg-[#f0eeef]">
      <TitleBar />
      <MenuBar />
      <Ribbon />
      <div className="flex h-[548px] shrink-0">
        <NavTree />
        <div className="ml-[3px] flex flex-1 flex-col">
          <DocTabs />
          <Canvas />
          <ViewTabs />
          <div className="mt-[4px] flex h-[237px] shrink-0">
            <ParamPanel />
            <ResultPanel />
            <MessagesPanel />
          </div>
        </div>
      </div>
      <StatusBar />
    </div>
  );
}
